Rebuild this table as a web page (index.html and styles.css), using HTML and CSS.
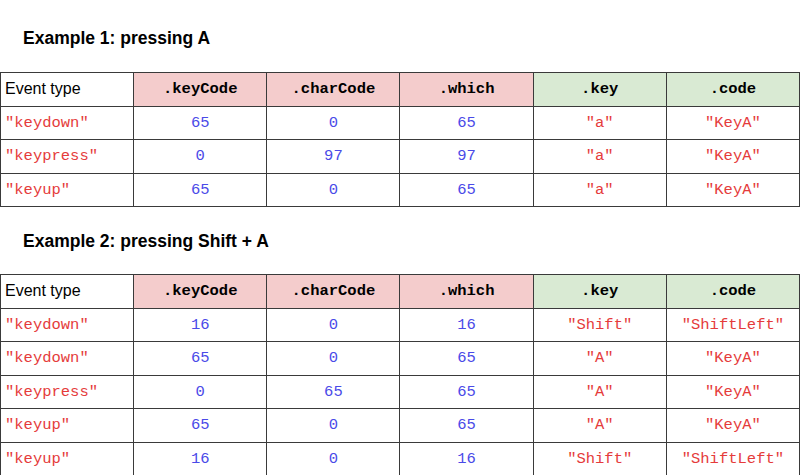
FILE: index.html
```html
<!DOCTYPE html>
<html>
<head>
<meta charset="utf-8">
<link rel="stylesheet" href="styles.css">
</head>
<body>
<section class="example">
  <h2 class="title">Example 1: pressing A</h2>
  <table class="events">
    <tr>
      <th class="label">Event type</th>
      <th class="legacy">.keyCode</th>
      <th class="legacy">.charCode</th>
      <th class="legacy">.which</th>
      <th class="modern">.key</th>
      <th class="modern">.code</th>
    </tr>
    <tr><td class="str left">"keydown"</td><td class="num">65</td><td class="num">0</td><td class="num">65</td><td class="str">"a"</td><td class="str">"KeyA"</td></tr>
    <tr><td class="str left">"keypress"</td><td class="num">0</td><td class="num">97</td><td class="num">97</td><td class="str">"a"</td><td class="str">"KeyA"</td></tr>
    <tr><td class="str left">"keyup"</td><td class="num">65</td><td class="num">0</td><td class="num">65</td><td class="str">"a"</td><td class="str">"KeyA"</td></tr>
  </table>
</section>
<section class="example">
  <h2 class="title">Example 2: pressing Shift + A</h2>
  <table class="events">
    <tr>
      <th class="label">Event type</th>
      <th class="legacy">.keyCode</th>
      <th class="legacy">.charCode</th>
      <th class="legacy">.which</th>
      <th class="modern">.key</th>
      <th class="modern">.code</th>
    </tr>
    <tr><td class="str left">"keydown"</td><td class="num">16</td><td class="num">0</td><td class="num">16</td><td class="str">"Shift"</td><td class="str">"ShiftLeft"</td></tr>
    <tr><td class="str left">"keydown"</td><td class="num">65</td><td class="num">0</td><td class="num">65</td><td class="str">"A"</td><td class="str">"KeyA"</td></tr>
    <tr><td class="str left">"keypress"</td><td class="num">0</td><td class="num">65</td><td class="num">65</td><td class="str">"A"</td><td class="str">"KeyA"</td></tr>
    <tr><td class="str left">"keyup"</td><td class="num">65</td><td class="num">0</td><td class="num">65</td><td class="str">"A"</td><td class="str">"KeyA"</td></tr>
    <tr><td class="str left">"keyup"</td><td class="num">16</td><td class="num">0</td><td class="num">16</td><td class="str">"Shift"</td><td class="str">"ShiftLeft"</td></tr>
  </table>
</section>
</body>
</html>
```
FILE: styles.css
```css
html, body {
  margin: 0;
  padding: 0;
  background: #ffffff;
}
body {
  padding-top: 4px;
  font-family: "Liberation Sans", Arial, sans-serif;
  color: #000;
}
.title {
  margin: 24px 0 24px 0;
  padding-left: 23px;
  font-size: 17.5px;
  line-height: 20px;
  font-weight: bold;
}
.example + .example .title {
  margin-top: 24px;
  margin-bottom: 23px;
}
.events {
  width: 800px;
  table-layout: fixed;
  border-collapse: collapse;
}
.events tr {
  height: 33.5px;
}
.events th, .events td {
  border: 1px solid #3a3a3a;
  padding: 0 5px;
  text-align: center;
  vertical-align: middle;
  font-family: "Liberation Mono", "Courier New", monospace;
  font-size: 15.5px;
  white-space: nowrap;
}
.events th {
  font-weight: bold;
}
.events th.label {
  text-align: left;
  font-family: "Liberation Sans", Arial, sans-serif;
  font-weight: normal;
  font-size: 16px;
  padding-left: 4px;
}
.legacy {
  background: #f4cccc;
}
.modern {
  background: #d9ead3;
}
.num {
  color: #4a4ae8;
}
.str {
  color: #e53b3b;
}
.events td.left {
  text-align: left;
  padding-left: 4px;
}
```
